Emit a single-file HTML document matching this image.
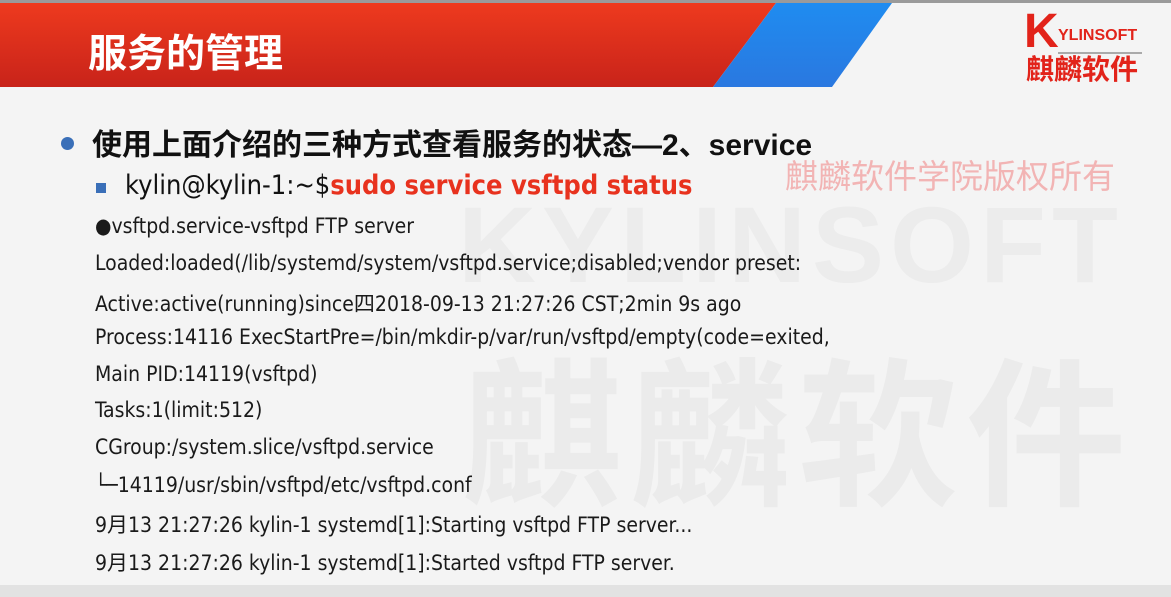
<!DOCTYPE html>
<html><head><meta charset="utf-8"><style>
body{margin:0;width:1171px;height:597px;overflow:hidden;background:#f4f4f4;position:relative;font-family:"Liberation Sans","Noto Sans CJK SC",sans-serif;}
.abs{position:absolute;white-space:nowrap;}
.line{position:absolute;left:95px;font-size:21px;color:#1a1a1a;white-space:nowrap;font-family:"DejaVu Sans Condensed","DejaVu Sans","Noto Sans CJK SC",sans-serif;}
</style></head><body>
<div class="abs" style="left:0;top:0;width:1171px;height:3px;background:#9a9a9a"></div>
<svg class="abs" style="left:0;top:0" width="1171" height="90">
<defs><linearGradient id="r" x1="0" y1="0" x2="0" y2="1"><stop offset="0" stop-color="#ee3a1e"/><stop offset="1" stop-color="#c8231a"/></linearGradient>
<linearGradient id="b" x1="0" y1="0" x2="0" y2="1"><stop offset="0" stop-color="#1f8cf0"/><stop offset="1" stop-color="#2a78e0"/></linearGradient></defs>
<polygon points="0,3 776,3 713,87 0,87" fill="url(#r)"/>
<polygon points="776,3 892,3 832,87 713,87" fill="url(#b)"/>
</svg>
<div class="abs" style="left:88px;top:23px;font-size:39px;font-weight:bold;color:#fff">服务的管理</div>
<div class="abs" style="left:458px;top:182px;font-size:108px;font-weight:bold;color:#ececec;letter-spacing:6px">KYLINSOFT</div>
<div class="abs" style="left:462px;top:358px;font-size:160px;color:#ebebeb;font-weight:bold;letter-spacing:8px;line-height:1">麒麟软件</div>
<div class="abs" style="left:785px;top:150px;font-size:33px;color:#f2b4b4">麒麟软件学院版权所有</div>
<div class="abs" style="left:1024px;top:8px;font-size:48px;font-weight:bold;color:#e2231a;line-height:1">K</div>
<div class="abs" style="left:1058px;top:27px;font-size:16px;font-weight:bold;color:#e2231a">YLINSOFT</div>
<div class="abs" style="left:1058px;top:52px;width:84px;height:2px;background:#aaa"></div>
<div class="abs" style="left:1026px;top:55px;font-size:28px;font-weight:bold;color:#e2231a;line-height:1.1">麒麟软件</div>
<div class="abs" style="left:61px;top:137px;width:13px;height:13px;border-radius:50%;background:#3a6fb8"></div>
<div class="abs" style="left:92px;top:120px;font-size:30px;font-weight:bold;color:#111">使用上面介绍的三种方式查看服务的状态—2、service</div>
<div class="abs" style="left:96px;top:183px;width:10px;height:10px;background:#3a6fb8"></div>
<div class="abs" style="left:125px;top:170px;font-size:27px;color:#111;font-family:'DejaVu Sans Condensed','DejaVu Sans',sans-serif">kylin@kylin-1:~$<b style="color:#e8321e">sudo service vsftpd status</b></div>
<div class="line" style="top:214px">●vsftpd.service-vsftpd FTP server</div>
<div class="line" style="top:251px">Loaded:loaded(/lib/systemd/system/vsftpd.service;disabled;vendor preset:</div>
<div class="line" style="top:288px">Active:active(running)since四2018-09-13 21:27:26 CST;2min 9s ago</div>
<div class="line" style="top:325px">Process:14116 ExecStartPre=/bin/mkdir-p/var/run/vsftpd/empty(code=exited,</div>
<div class="line" style="top:362px">Main PID:14119(vsftpd)</div>
<div class="line" style="top:398px">Tasks:1(limit:512)</div>
<div class="line" style="top:435px">CGroup:/system.slice/vsftpd.service</div>
<div class="line" style="top:473px">└─14119/usr/sbin/vsftpd/etc/vsftpd.conf</div>
<div class="line" style="top:509px">9月13 21:27:26 kylin-1 systemd[1]:Starting vsftpd FTP server...</div>
<div class="line" style="top:547px">9月13 21:27:26 kylin-1 systemd[1]:Started vsftpd FTP server.</div>
<div class="abs" style="left:0;top:585px;width:1171px;height:12px;background:#e2e2e2"></div>
</body></html>
